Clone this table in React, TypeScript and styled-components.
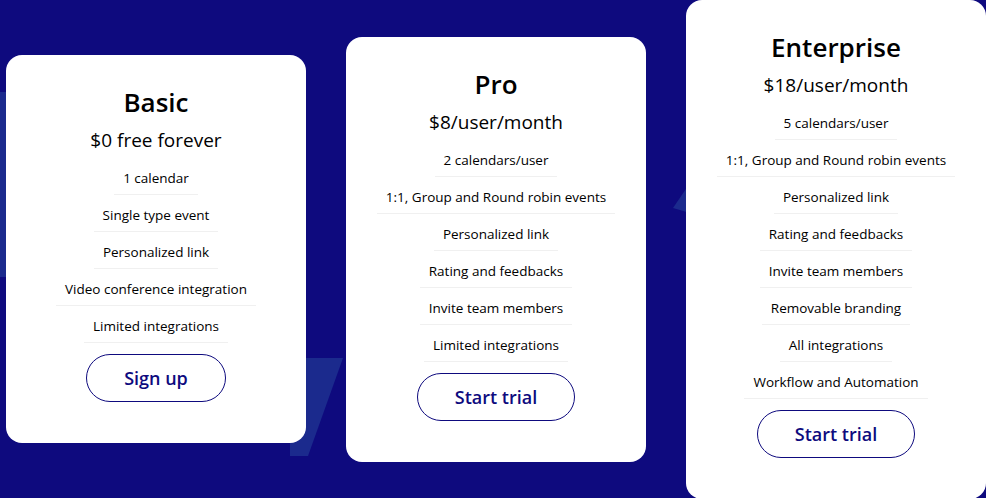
import styled, { createGlobalStyle } from 'styled-components';

const NAVY = '#0e0a7e';

const GlobalStyle = createGlobalStyle`
  html, body {
    margin: 0;
    padding: 0;
    background: ${NAVY};
    overflow: hidden;
  }
  * {
    box-sizing: border-box;
  }
`;

interface Plan {
  name: string;
  price: string;
  features: string[];
  action: string;
}

const plans: Plan[] = [
  {
    name: 'Basic',
    price: '$0 free forever',
    features: [
      '1 calendar',
      'Single type event',
      'Personalized link',
      'Video conference integration',
      'Limited integrations',
    ],
    action: 'Sign up',
  },
  {
    name: 'Pro',
    price: '$8/user/month',
    features: [
      '2 calendars/user',
      '1:1, Group and Round robin events',
      'Personalized link',
      'Rating and feedbacks',
      'Invite team members',
      'Limited integrations',
    ],
    action: 'Start trial',
  },
  {
    name: 'Enterprise',
    price: '$18/user/month',
    features: [
      '5 calendars/user',
      '1:1, Group and Round robin events',
      'Personalized link',
      'Rating and feedbacks',
      'Invite team members',
      'Removable branding',
      'All integrations',
      'Workflow and Automation',
    ],
    action: 'Start trial',
  },
];

// faint background lettering peeking out between the cards
const Backdrop = () => (
  <S.Backdrop viewBox="0 0 986 498" preserveAspectRatio="none">
    <polygon points="0,92 10,92 10,277 0,277" />
    <polygon points="290,358 343,358 308,456 290,456" />
    <polygon points="690,183 673,208 690,213" />
  </S.Backdrop>
);

const App = () => {
  return (
    <>
      <GlobalStyle />
      <S.Page>
        <Backdrop />
        {plans.map((plan) => (
          <S.Card key={plan.name}>
            <S.Title>{plan.name}</S.Title>
            <S.Price>{plan.price}</S.Price>
            <S.Features>
              {plan.features.map((f) => (
                <S.Feature key={f}>{f}</S.Feature>
              ))}
            </S.Features>
            <S.Button>{plan.action}</S.Button>
          </S.Card>
        ))}
      </S.Page>
    </>
  );
};

const S = {
  Page: styled.div`
    position: relative;
    display: flex;
    align-items: center;
    gap: 40px;
    height: 498px;
    padding-left: 6px;
    background: ${NAVY};
    font-family: 'Open Sans', 'Noto Sans', sans-serif;
    color: #000;
  `,
  Backdrop: styled.svg`
    position: absolute;
    inset: 0;
    width: 100%;
    height: 100%;
    z-index: 0;

    polygon {
      fill: #1b2a8d;
    }
  `,
  Card: styled.div`
    position: relative;
    z-index: 1;
    flex: 0 0 300px;
    display: flex;
    flex-direction: column;
    align-items: center;
    padding: 31px 0 41px;
    background: #fff;
    border-radius: 16px;
  `,
  Title: styled.h2`
    margin: 0 0 6px;
    font-size: 26px;
    line-height: 32px;
    font-weight: 600;
    color: #000;
  `,
  Price: styled.div`
    margin-bottom: 2px;
    font-size: 19px;
    line-height: 32px;
  `,
  Features: styled.div`
    display: flex;
    flex-direction: column;
    align-items: center;
  `,
  Feature: styled.div`
    padding: 10px 9px 6px;
    font-size: 13.5px;
    line-height: 20px;
    border-bottom: 1px solid #f0f0f0;
  `,
  Button: styled.button`
    margin-top: 11px;
    height: 48px;
    padding: 0 37px;
    border: 1.5px solid ${NAVY};
    border-radius: 24px;
    background: #fff;
    color: ${NAVY};
    font-family: inherit;
    font-size: 18px;
    font-weight: 600;
    cursor: pointer;
  `,
};

export default App;
